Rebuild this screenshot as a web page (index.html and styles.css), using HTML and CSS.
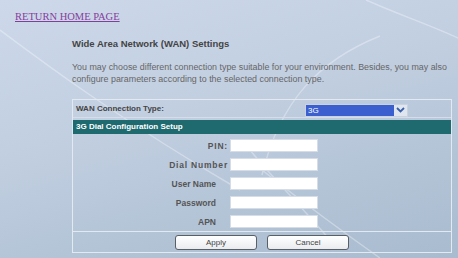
FILE: index.html
```html
<!DOCTYPE html>
<html lang="en">
<head>
    <meta charset="UTF-8">
    <title>WAN Settings</title>
    <link rel="stylesheet" href="styles.css">
</head>
<body>
<svg class="swoosh" width="458" height="258" viewBox="0 0 458 258">
    <path d="M0 30 C40 60 120 120 240 190" />
    <path d="M366 0 C400 15 430 25 458 38" />
    <path d="M380 36 C320 60 280 100 262 175" />
    <path d="M250 150 C270 175 300 205 330 240" />
    <path d="M262 170 C300 200 340 230 380 258" />
</svg>
<div class="page">
    <a class="home" href="#">RETURN HOME PAGE</a>
    <div class="content">
        <h1 class="title">Wide Area Network (WAN) Settings</h1>
        <p class="desc">You may choose different connection type suitable for your environment. Besides, you may also configure parameters according to the selected connection type.</p>
        <div class="box">
            <div class="type-row">
                <span class="type-label">WAN Connection Type:</span>
                <div class="select">
                    <span class="select-value">3G</span>
                    <span class="select-arrow">
                        <svg width="9" height="6" viewBox="0 0 9 6"><path d="M1 1 L4.5 4.5 L8 1" /></svg>
                    </span>
                </div>
            </div>
            <div class="head">3G Dial Configuration Setup</div>
            <div class="fields">
                <div class="field wide"><label>PIN:</label><input type="text"></div>
                <div class="field wide"><label>Dial Number</label><input type="text"></div>
                <div class="field"><label>User Name</label><input type="text"></div>
                <div class="field"><label>Password</label><input type="password"></div>
                <div class="field"><label>APN</label><input type="text"></div>
            </div>
            <div class="buttons">
                <button class="btn">Apply</button>
                <button class="btn">Cancel</button>
            </div>
        </div>
    </div>
</div>
</body>
</html>
```

FILE: styles.css
```css
* {
    padding: 0;
    margin: 0;
    box-sizing: border-box;
}

body {
    width: 458px;
    height: 258px;
    overflow: hidden;
    background: linear-gradient(165deg, #cdd9ea 0%, #c2cfe1 40%, #b2c3d6 75%, #a9bbcf 100%);
    font-family: "Liberation Sans", Arial, sans-serif;
}

.swoosh {
    position: absolute;
    left: 0;
    top: 0;
    fill: none;
    stroke: #fff;
    stroke-width: 1.5;
    opacity: 0.32;
}

.page {
    position: relative;
    padding-top: 11px;
}

.home {
    display: block;
    margin-left: 15px;
    font-family: "Liberation Serif", "Times New Roman", serif;
    font-size: 10.5px;
    line-height: 12px;
    color: #853d9c;
    text-decoration: underline;
}

.content {
    margin-left: 72px;
    width: 380px;
}

.title {
    margin-top: 15px;
    font-size: 9.5px;
    line-height: 11px;
    font-weight: bold;
    color: #444;
}

.desc {
    margin-top: 12px;
    font-size: 8.9px;
    line-height: 12px;
    color: #666;
}

.box {
    margin-top: 14px;
    border: 1px solid #e2e9f1;
}

.type-row {
    display: flex;
    align-items: center;
    height: 18px;
    border-bottom: 1px solid #d5dee8;
}

.type-label {
    width: 232px;
    padding-left: 3px;
    font-size: 8px;
    font-weight: bold;
    color: #444;
}

.select {
    display: flex;
    width: 103px;
    height: 13px;
    margin-top: 3px;
    background: #e8edf4;
    border: 1px solid #c9d3df;
}

.select-value {
    flex: 1;
    background: #3b5fcf;
    color: #fff;
    font-size: 8px;
    line-height: 11px;
    padding-left: 2px;
}

.select-arrow {
    width: 13px;
    display: flex;
    align-items: center;
    justify-content: center;
    background: #dfe6f0;
}

.select-arrow path {
    fill: none;
    stroke: #3b5fa8;
    stroke-width: 1.8;
}

.head {
    margin-top: 2px;
    height: 14px;
    padding-left: 3px;
    background: #1f6a6f;
    color: #fff;
    font-size: 8px;
    font-weight: bold;
    line-height: 14px;
}

.fields {
    display: flex;
    flex-direction: column;
    gap: 6px;
    padding: 5px 0 3px;
    border-bottom: 1px solid #e2e9f1;
}

.field {
    display: flex;
    align-items: center;
}

.field label {
    width: 157px;
    padding-right: 14px;
    text-align: right;
    font-size: 8.5px;
    font-weight: bold;
    color: #555;
}

.field.wide label {
    padding-right: 2px;
    letter-spacing: 0.8px;
}

.field input {
    width: 88px;
    height: 13px;
    border: 1px solid #d6dde6;
    background: #fff;
}

.buttons {
    display: flex;
    justify-content: center;
    gap: 10px;
    padding: 3px 0 2px;
}

.btn {
    width: 82px;
    height: 15px;
    border: 1px solid #5a5f66;
    border-radius: 3px;
    background: linear-gradient(#ffffff, #e9ecef);
    font-family: "Liberation Sans", Arial, sans-serif;
    font-size: 8px;
    color: #444;
}
```
